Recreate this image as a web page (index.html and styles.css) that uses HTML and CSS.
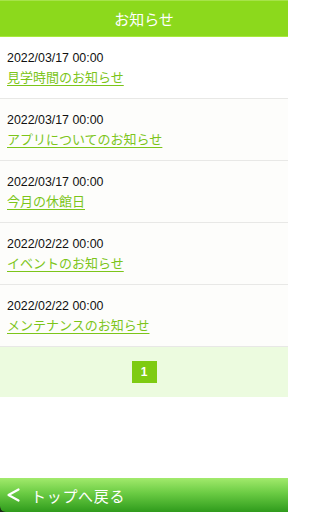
FILE: index.html
```html
<!DOCTYPE html>
<html lang="ja">
<head>
<meta charset="utf-8">
<title>お知らせ</title>
<link rel="stylesheet" href="styles.css">
</head>
<body>
<div class="page">
  <header class="header">お知らせ</header>
  <ul class="news">
    <li class="item"><div class="date">2022/03/17 00:00</div><a class="title" href="#">見学時間のお知らせ</a></li>
    <li class="item"><div class="date">2022/03/17 00:00</div><a class="title" href="#">アプリについてのお知らせ</a></li>
    <li class="item"><div class="date">2022/03/17 00:00</div><a class="title" href="#">今月の休館日</a></li>
    <li class="item"><div class="date">2022/02/22 00:00</div><a class="title" href="#">イベントのお知らせ</a></li>
    <li class="item"><div class="date">2022/02/22 00:00</div><a class="title" href="#">メンテナンスのお知らせ</a></li>
  </ul>
  <div class="pager"><span class="page-num">1</span></div>
  <div class="footer-wrap">
    <a class="footer" href="#">
      <svg class="chev" width="14" height="14" viewBox="0 0 14 14"><polyline points="12.5,1.5 2.5,7 12.5,12.5" fill="none" stroke="#fff" stroke-width="2.2" stroke-linecap="round" stroke-linejoin="round"/></svg>
      <span class="footer-text">トップへ戻る</span>
    </a>
  </div>
</div>
</body>
</html>
```
FILE: styles.css
```css
html, body {
  margin: 0;
  padding: 0;
  background: #ffffff;
}
body {
  font-family: "Liberation Sans", "Noto Sans CJK JP", sans-serif;
}
.page {
  display: flex;
  flex-direction: column;
  width: 288px;
  min-height: 512px;
}
.header {
  background: #8cd91c;
  border-top: 1px solid #a6e34a;
  border-bottom: 1px solid #a8ea3c;
  box-sizing: border-box;
  height: 37px;
  color: #ffffff;
  font-family: "Noto Sans CJK JP", sans-serif;
  font-size: 15px;
  display: flex;
  align-items: center;
  justify-content: center;
}
.news {
  list-style: none;
  margin: 0;
  padding: 0;
}
.item {
  background: #fdfdfb;
  border-bottom: 1px solid #e8e8e6;
  padding: 13px 7px 13px;
  display: flex;
  flex-direction: column;
  gap: 3px;
}
.item:first-child {
  background: #ffffff;
}
.date {
  font-size: 12.4px;
  line-height: 16px;
  color: #111111;
}
.title {
  font-family: "Noto Sans CJK JP", sans-serif;
  font-size: 13px;
  line-height: 16px;
  color: #7cc51a;
  text-decoration: underline;
  text-underline-offset: 3px;
  align-self: flex-start;
}
.pager {
  background: #ecfbdf;
  height: 50px;
  display: flex;
  align-items: center;
  justify-content: center;
}
.page-num {
  width: 25px;
  height: 22px;
  background: #7ecb12;
  color: #ffffff;
  font-size: 12px;
  font-weight: bold;
  display: flex;
  align-items: center;
  justify-content: center;
}
.footer-wrap {
  margin-top: auto;
  background: #1d2a1a;
}
.footer {
  height: 34px;
  box-sizing: border-box;
  display: flex;
  align-items: center;
  gap: 11px;
  padding-left: 6px;
  background: linear-gradient(#a2ea6c, #6acb43 45%, #2f9b1c);
  border-bottom-left-radius: 6px;
  text-decoration: none;
}
.chev {
  display: block;
}
.footer-text {
  color: #ffffff;
  font-family: "Noto Sans CJK JP", sans-serif;
  font-size: 15px;
  letter-spacing: 0.7px;
}
```
